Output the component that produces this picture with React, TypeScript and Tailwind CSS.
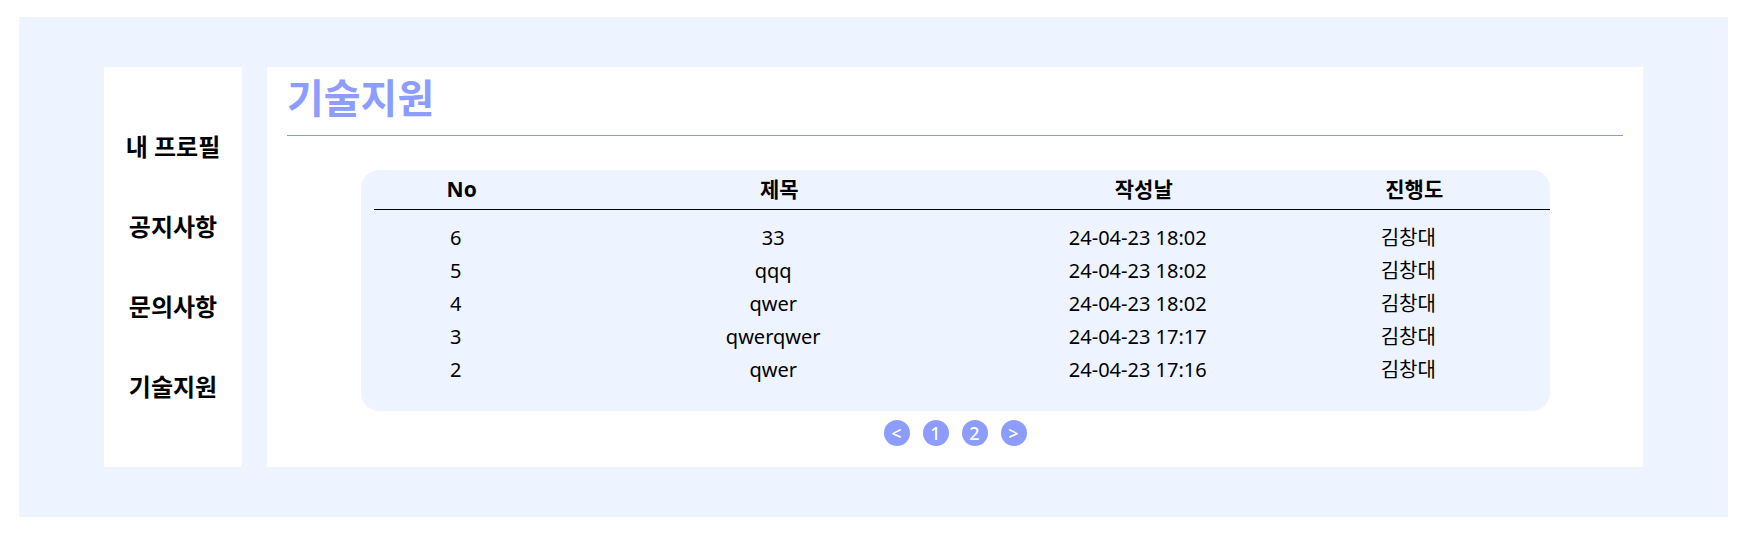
import React from "react";

const rows = [
  { no: "6", title: "33", date: "24-04-23 18:02", name: "김창대" },
  { no: "5", title: "qqq", date: "24-04-23 18:02", name: "김창대" },
  { no: "4", title: "qwer", date: "24-04-23 18:02", name: "김창대" },
  { no: "3", title: "qwerqwer", date: "24-04-23 17:17", name: "김창대" },
  { no: "2", title: "qwer", date: "24-04-23 17:16", name: "김창대" },
];

const menu = ["내 프로필", "공지사항", "문의사항", "기술지원"];

export default function App() {
  return (
    <div className="min-h-[537px] bg-white pt-[17px] pl-[19px] font-['Noto_Sans','Noto_Sans_CJK_KR',sans-serif] text-black">
      <div className="flex h-[500px] w-[1709px] gap-[25px] bg-[#eef4ff] px-[85px] py-[50px]">
        <aside className="flex w-[138px] flex-col items-center bg-white pt-[40px]">
          {menu.map((m) => (
            <div
              key={m}
              className="flex h-[80px] items-center text-[24px] font-bold leading-none"
            >
              {m}
            </div>
          ))}
        </aside>
        <main className="flex w-[1376px] flex-col bg-white px-[20px]">
          <h1 className="h-[68px] pt-[7px] text-[40px] font-bold leading-[48px] text-[#8c9cff]">
            기술지원
          </h1>
          <div className="h-px bg-[#8a98ee]" />
          <div className="mx-auto mt-[34px] h-[241px] w-[1189px] rounded-[18px] bg-[#eef4ff] pl-[13px]">
            <div className="grid h-[40px] grid-cols-[15fr_39fr_23fr_23fr] items-center border-b border-black text-[21px] font-bold">
              <div className="text-center">No</div>
              <div className="text-center">제목</div>
              <div className="text-center">작성날</div>
              <div className="text-center">진행도</div>
            </div>
            <div className="pt-[11px]">
              {rows.map((r, i) => (
                <div
                  key={i}
                  className="grid h-[33px] grid-cols-[15fr_39fr_23fr_23fr] items-center text-[20px]"
                >
                  <div className="pr-[12px] text-center">{r.no}</div>
                  <div className="pr-[12px] text-center">{r.title}</div>
                  <div className="pr-[12px] text-center">{r.date}</div>
                  <div className="pr-[12px] text-center">{r.name}</div>
                </div>
              ))}
            </div>
          </div>
          <div className="mt-[9px] flex justify-center gap-[13px]">
            {["<", "1", "2", ">"].map((p) => (
              <div
                key={p}
                className="flex h-[26px] w-[26px] items-center justify-center rounded-full bg-[#8c9cff] text-[18px] font-medium leading-none text-white"
              >
                {p}
              </div>
            ))}
          </div>
        </main>
      </div>
    </div>
  );
}
